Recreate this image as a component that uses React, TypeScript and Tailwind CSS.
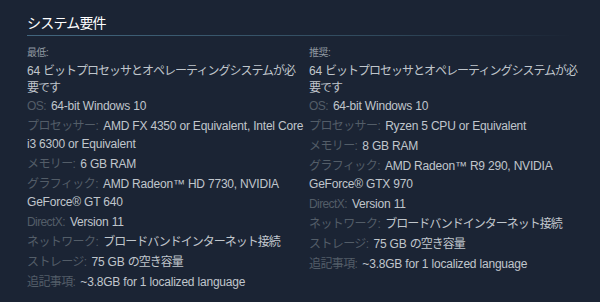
const font = { fontFamily: '"Liberation Sans", "Noto Sans CJK JP", sans-serif' }

type Row = { label: string; value: React.ReactNode }

// Japanese runs are set slightly tighter, as in the original
const jp = (s: string) => <span className="tracking-[-1px]">{s}</span>

const minimum: Row[] = [
  { label: 'OS:', value: '64-bit Windows 10' },
  { label: 'プロセッサー:', value: <>AMD FX 4350 or Equivalent, Intel Core<br />i3 6300 or Equivalent</> },
  { label: 'メモリー:', value: '6 GB RAM' },
  { label: 'グラフィック:', value: <>AMD Radeon™ HD 7730, NVIDIA<br />GeForce® GT 640</> },
  { label: 'DirectX:', value: 'Version 11' },
  { label: 'ネットワーク:', value: jp('ブロードバンドインターネット接続') },
  { label: 'ストレージ:', value: <>75 GB {jp('の空き容量')}</> },
  { label: '追記事項:', value: '~3.8GB for 1 localized language' },
]

const recommended: Row[] = [
  { label: 'OS:', value: '64-bit Windows 10' },
  { label: 'プロセッサー:', value: 'Ryzen 5 CPU or Equivalent' },
  { label: 'メモリー:', value: '8 GB RAM' },
  { label: 'グラフィック:', value: <>AMD Radeon™ R9 290, NVIDIA<br />GeForce® GTX 970</> },
  { label: 'DirectX:', value: 'Version 11' },
  { label: 'ネットワーク:', value: jp('ブロードバンドインターネット接続') },
  { label: 'ストレージ:', value: <>75 GB {jp('の空き容量')}</> },
  { label: '追記事項:', value: '~3.8GB for 1 localized language' },
]

function Column({ heading, rows }: { heading: string; rows: Row[] }) {
  return (
    <div className="w-[282px] shrink-0">
      <div className="text-[10px] leading-[14px] text-[#8f98a0] mb-[3px] tracking-[-0.5px]">{heading}</div>
      <ul className="text-[12px] leading-[18px] text-[#c0c6cc] tracking-[-0.2px]">
        <li className="leading-[17px] whitespace-nowrap">
          64 {jp('ビットプロセッサとオペレーティングシステムが必')}<br />{jp('要です')}
        </li>
        {rows.map((r) => (
          <li key={r.label} className="mb-[2px] whitespace-nowrap">
            <span className="text-[#535d68] mr-[5px] tracking-[-0.6px]">{r.label}</span>
            {r.value}
          </li>
        ))}
      </ul>
    </div>
  )
}

export default function App() {
  return (
    <div className="w-[600px] h-[302px] bg-[#1b2434] overflow-hidden px-[27px] pt-[13px]" style={font}>
      <h2 className="text-[14px] leading-[20px] text-white pb-[2px] tracking-[-0.8px]">システム要件</h2>
      <div className="h-px w-[545px] bg-[linear-gradient(to_right,#42667e_0%,#30495c_65%,transparent_100%)]" />
      <div className="flex mt-[10px]">
        <Column heading="最低:" rows={minimum} />
        <Column heading="推奨:" rows={recommended} />
      </div>
    </div>
  )
}
